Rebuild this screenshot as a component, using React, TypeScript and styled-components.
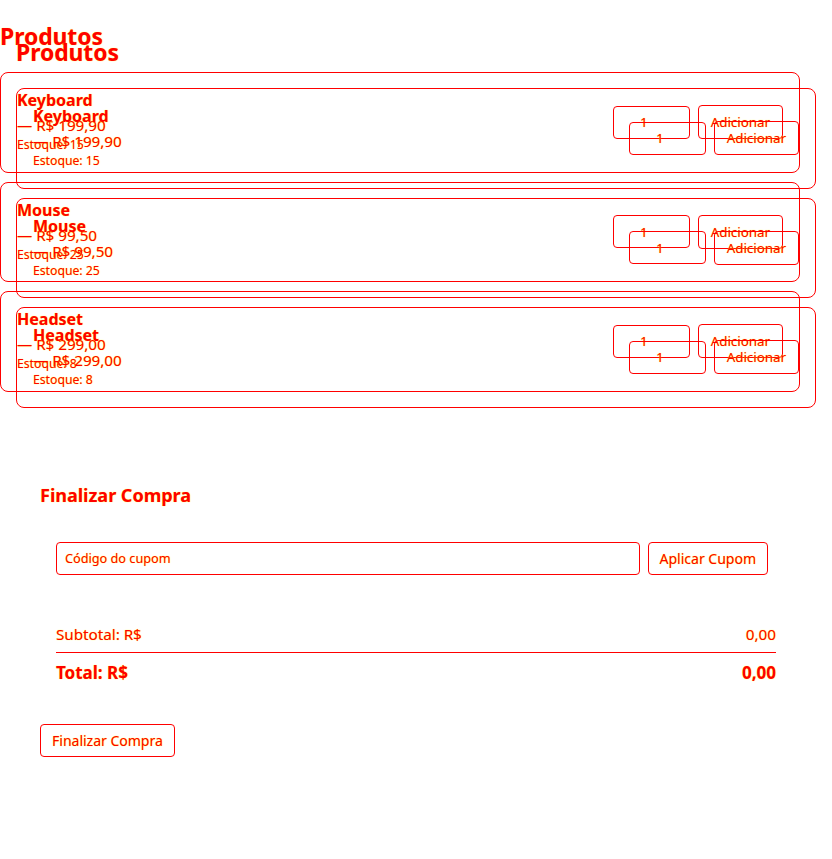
import React from 'react';
import styled, { createGlobalStyle } from 'styled-components';

const RED = '#ff0000';
const GLOW = '0 0 1px #ffff00';

const GlobalStyle = createGlobalStyle`
  html, body { margin: 0; padding: 0; background: #ffffff; }
  body {
    font-family: "Noto Sans", sans-serif;
    color: ${RED};
    text-shadow: ${GLOW};
  }
  button, input { font-family: "Noto Sans", sans-serif; }
`;

const Page = styled.div`
  width: 832px;
`;

const CatalogStack = styled.div`
  position: relative;
`;

const Ghost = styled.div`
  position: absolute;
  top: 16px;
  left: 16px;
`;

const CatalogWrap = styled.section`
  width: 800px;
  padding-top: 21px;
`;

const Title = styled.h2`
  margin: 0 0 20px;
  font-size: 22.8px;
  font-weight: 700;
  line-height: normal;
`;

const List = styled.div`
  display: flex;
  flex-direction: column;
  gap: 9px;
`;

const Card = styled.div`
  display: flex;
  align-items: center;
  justify-content: space-between;
  padding: 16px;
  border: 1px solid ${RED};
  border-radius: 8px;
`;

const Info = styled.div`
  display: flex;
  flex-direction: column;
`;

const Name = styled.h3`
  margin: 0 0 4px;
  font-size: 16px;
  font-weight: 700;
  line-height: 22px;
`;

const Price = styled.p`
  margin: 0;
  font-size: 15.2px;
  line-height: 21px;
`;

const Stock = styled.small`
  display: block;
  margin-bottom: 2.5px;
  font-size: 12.2px;
  line-height: 17px;
`;

const Actions = styled.div`
  display: flex;
  align-items: center;
  gap: 8px;
`;

const Qty = styled.input`
  box-sizing: border-box;
  width: 77px;
  height: 33px;
  padding: 0 8px;
  border: 1px solid ${RED};
  border-radius: 4px;
  background: transparent;
  color: ${RED};
  text-shadow: ${GLOW};
  font-size: 13.33px;
  text-align: center;
  outline: none;
`;

const Button = styled.button<{ $size?: number; $pad?: number }>`
  box-sizing: border-box;
  height: ${p => (p.$size && p.$size > 13.5 ? 33 : 34)}px;
  padding: 0 ${p => p.$pad ?? 12}px;
  border: 1px solid ${RED};
  border-radius: 4px;
  background: transparent;
  color: ${RED};
  text-shadow: ${GLOW};
  font-size: ${p => p.$size ?? 13.33}px;
  line-height: normal;
  cursor: pointer;
  white-space: nowrap;
`;

const Checkout = styled.section`
  margin: 75px 24px 0;
  padding: 16px;
`;

const CheckoutTitle = styled.h3`
  margin: 0 0 19px;
  font-size: 18px;
  font-weight: 700;
  line-height: normal;
`;

const CouponRow = styled.div`
  display: flex;
  align-items: center;
  gap: 8px;
  padding: 16px 24px 16px 16px;
  margin-bottom: 17px;
`;

const CouponInput = styled.input`
  flex: 1;
  box-sizing: border-box;
  height: 33px;
  padding: 0 8px;
  border: 1px solid ${RED};
  border-radius: 4px;
  background: transparent;
  color: ${RED};
  font-size: 12.7px;
  text-shadow: ${GLOW};
  outline: none;
  &::placeholder { color: ${RED}; opacity: 1; }
`;

const Summary = styled.div`
  padding: 16px;
`;

const SummaryRow = styled.div<{ $total?: boolean }>`
  display: flex;
  justify-content: space-between;
  font-size: ${p => (p.$total ? 17 : 15.2)}px;
  font-weight: ${p => (p.$total ? 700 : 400)};
  line-height: normal;
  padding: ${p => (p.$total ? '8px 0 0' : '0 0 8px')};
  border-bottom: ${p => (p.$total ? 'none' : `1px solid ${RED}`)};
`;

const Finish = styled.div`
  margin-top: 24px;
`;

const products = [
  { name: 'Keyboard', price: '199,90', stock: 15 },
  { name: 'Mouse', price: '99,50', stock: 25 },
  { name: 'Headset', price: '299,00', stock: 8 },
];

function Catalog() {
  return (
    <CatalogWrap>
      <Title>Produtos</Title>
      <List>
        {products.map(p => (
          <Card key={p.name}>
            <Info>
              <Name>{p.name}</Name>
              <Price>— R$ {p.price}</Price>
              <Stock>Estoque: {p.stock}</Stock>
            </Info>
            <Actions>
              <Qty type="number" min={1} defaultValue={1} />
              <Button>Adicionar</Button>
            </Actions>
          </Card>
        ))}
      </List>
    </CatalogWrap>
  );
}

export default function App() {
  return (
    <Page>
      <GlobalStyle />
      <CatalogStack>
        <Catalog />
        <Ghost>
          <Catalog />
        </Ghost>
      </CatalogStack>
      <Checkout>
        <CheckoutTitle>Finalizar Compra</CheckoutTitle>
        <CouponRow>
          <CouponInput type="text" placeholder="Código do cupom" />
          <Button $size={14} $pad={11}>Aplicar Cupom</Button>
        </CouponRow>
        <Summary>
          <SummaryRow>
            <span>Subtotal: R$</span>
            <span>0,00</span>
          </SummaryRow>
          <SummaryRow $total>
            <span>Total: R$</span>
            <span>0,00</span>
          </SummaryRow>
        </Summary>
        <Finish>
          <Button $size={14} $pad={11}>Finalizar Compra</Button>
        </Finish>
      </Checkout>
    </Page>
  );
}
